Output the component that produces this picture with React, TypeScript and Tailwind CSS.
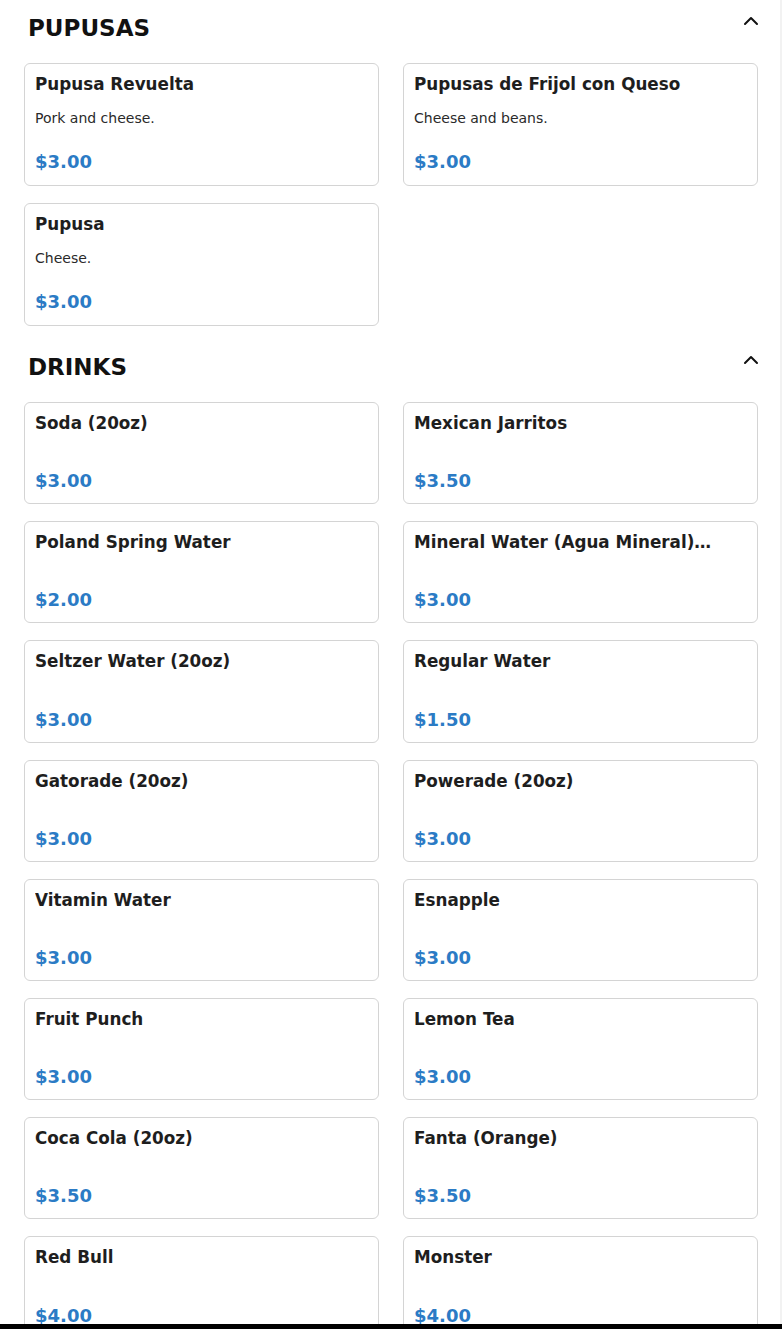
import { ChevronUp } from 'lucide-react'

type Item = { name: string; desc?: string; price: string }

const sections: { title: string; items: Item[] }[] = [
  {
    title: 'PUPUSAS',
    items: [
      { name: 'Pupusa Revuelta', desc: 'Pork and cheese.', price: '$3.00' },
      { name: 'Pupusas de Frijol con Queso', desc: 'Cheese and beans.', price: '$3.00' },
      { name: 'Pupusa', desc: 'Cheese.', price: '$3.00' },
    ],
  },
  {
    title: 'DRINKS',
    items: [
      { name: 'Soda (20oz)', price: '$3.00' },
      { name: 'Mexican Jarritos', price: '$3.50' },
      { name: 'Poland Spring Water', price: '$2.00' },
      { name: 'Mineral Water (Agua Mineral) (20oz)', price: '$3.00' },
      { name: 'Seltzer Water (20oz)', price: '$3.00' },
      { name: 'Regular Water', price: '$1.50' },
      { name: 'Gatorade (20oz)', price: '$3.00' },
      { name: 'Powerade (20oz)', price: '$3.00' },
      { name: 'Vitamin Water', price: '$3.00' },
      { name: 'Esnapple', price: '$3.00' },
      { name: 'Fruit Punch', price: '$3.00' },
      { name: 'Lemon Tea', price: '$3.00' },
      { name: 'Coca Cola (20oz)', price: '$3.50' },
      { name: 'Fanta (Orange)', price: '$3.50' },
      { name: 'Red Bull', price: '$4.00' },
      { name: 'Monster', price: '$4.00' },
    ],
  },
]

function MenuCard({ item }: { item: Item }) {
  return (
    <div
      className={
        item.desc
          ? 'flex flex-col rounded-md border border-[#d4d4d4] bg-white px-[10px] pt-2 pb-[10px]'
          : 'flex flex-col rounded-md border border-[#d4d4d4] bg-white px-[10px] pt-2 pb-[9px]'
      }
    >
      <h3 className="line-clamp-1 text-[16.8px] leading-6 font-bold text-[#1e1e1e]">{item.name}</h3>
      {item.desc && <p className="mt-3 text-sm leading-5 text-[#2a2a2a]">{item.desc}</p>}
      <div
        className={
          item.desc
            ? 'mt-[21px] text-[18px] leading-[26px] font-bold text-[#2b7bc5]'
            : 'mt-[33.2px] text-[18px] leading-[26px] font-bold text-[#2b7bc5]'
        }
      >
        {item.price}
      </div>
    </div>
  )
}

export default function App() {
  return (
    <div
      className="min-h-screen w-[782px] border-r-2 border-[#f2f2f2] bg-white pt-3 pl-6 pr-[22px]"
      style={{ fontFamily: '"DejaVu Sans", Verdana, sans-serif' }}
    >
      {sections.map((section, i) => (
        <section key={section.title} className={i === 0 ? '' : 'mt-[25px]'}>
          <div className="mb-[19px] flex items-start justify-between pl-1">
            <h2 className="text-[23px] leading-8 font-bold text-[#111]">{section.title}</h2>
            <button className="-mr-[5px] mt-[-3px] text-[#111]">
              <ChevronUp size={24} strokeWidth={2} />
            </button>
          </div>
          <div className="grid grid-cols-2 gap-x-6 gap-y-[17px]">
            {section.items.map((item) => (
              <MenuCard key={item.name} item={item} />
            ))}
          </div>
        </section>
      ))}
      <div className="h-24" />
      <div className="fixed inset-x-0 bottom-0 h-[5px] bg-black" />
    </div>
  )
}
